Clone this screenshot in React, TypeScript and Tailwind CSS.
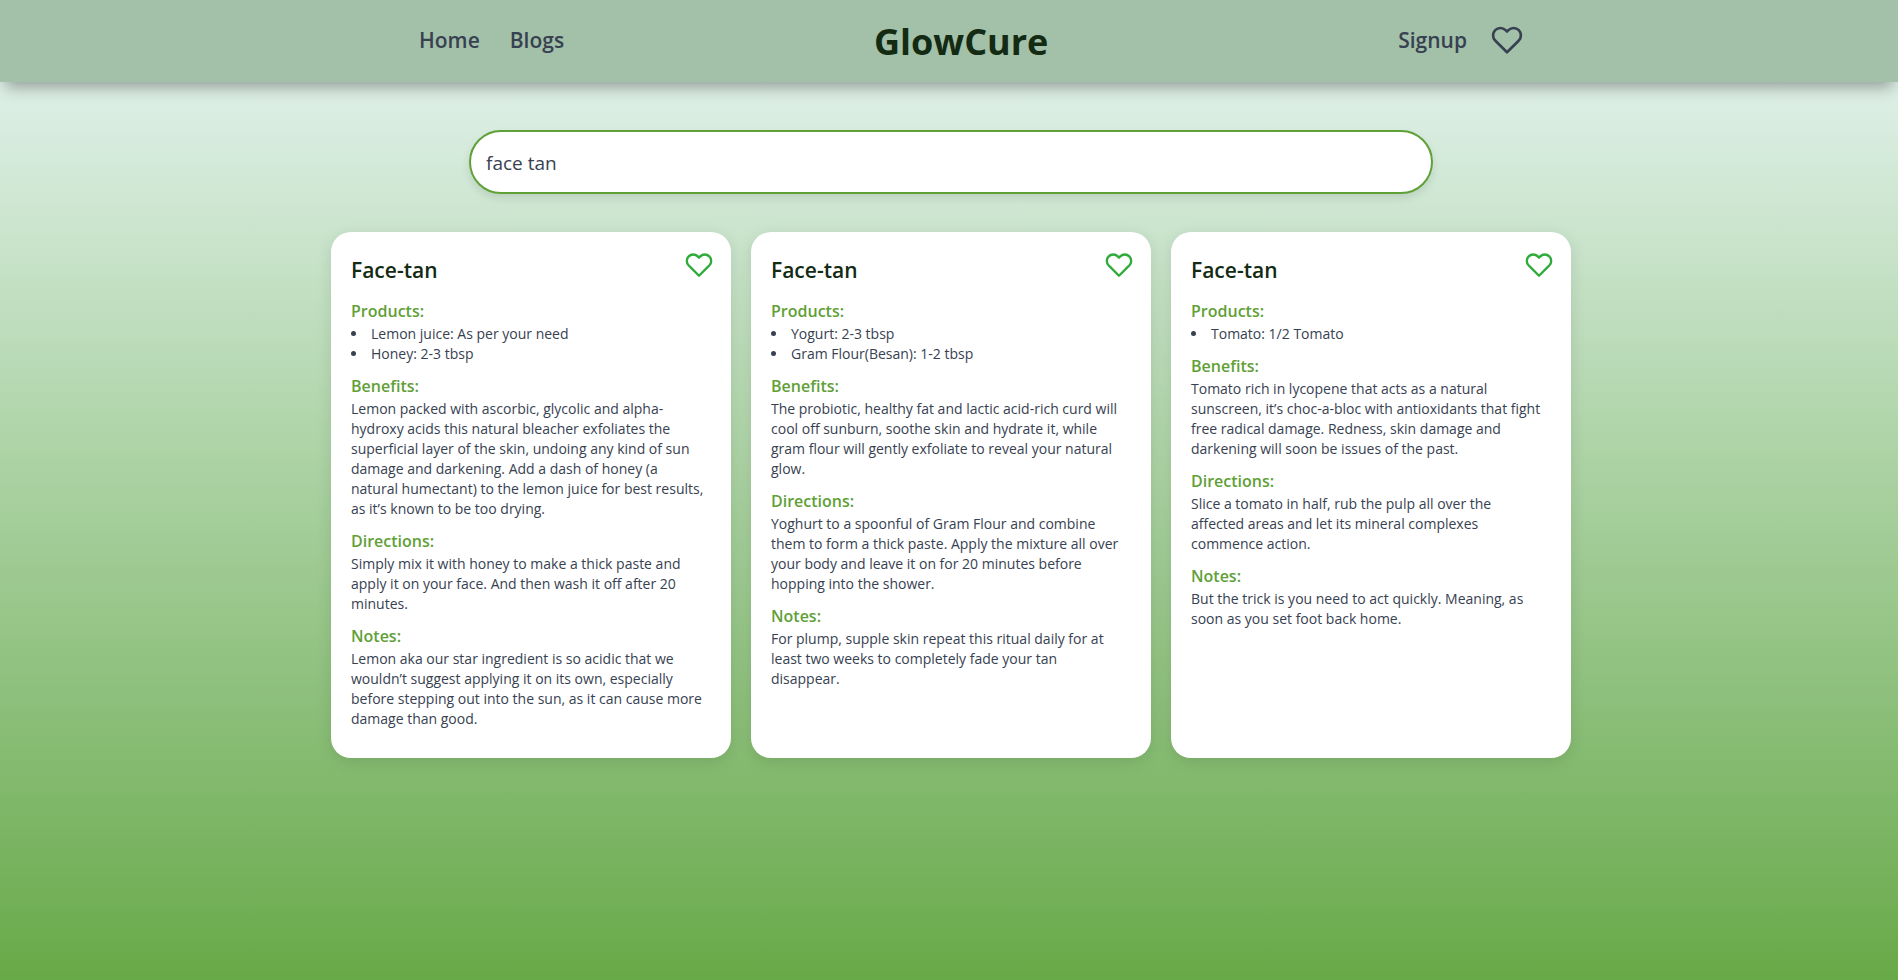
import { useState } from "react";
import { FiHeart } from "react-icons/fi";

type Remedy = {
  title: string;
  products: string[];
  benefits: string;
  directions: string;
  notes: string;
};

const remedies: Remedy[] = [
  {
    title: "Face-tan",
    products: ["Lemon juice: As per your need", "Honey: 2-3 tbsp"],
    benefits:
      "Lemon packed with ascorbic, glycolic and alpha-hydroxy acids this natural bleacher exfoliates the superficial layer of the skin, undoing any kind of sun damage and darkening. Add a dash of honey (a natural humectant) to the lemon juice for best results, as it’s known to be too drying.",
    directions:
      "Simply mix it with honey to make a thick paste and apply it on your face. And then wash it off after 20 minutes.",
    notes:
      "Lemon aka our star ingredient is so acidic that we wouldn’t suggest applying it on its own, especially before stepping out into the sun, as it can cause more damage than good.",
  },
  {
    title: "Face-tan",
    products: ["Yogurt: 2-3 tbsp", "Gram Flour(Besan): 1-2 tbsp"],
    benefits:
      "The probiotic, healthy fat and lactic acid-rich curd will cool off sunburn, soothe skin and hydrate it, while gram flour will gently exfoliate to reveal your natural glow.",
    directions:
      "Yoghurt to a spoonful of Gram Flour and combine them to form a thick paste. Apply the mixture all over your body and leave it on for 20 minutes before hopping into the shower.",
    notes:
      "For plump, supple skin repeat this ritual daily for at least two weeks to completely fade your tan disappear.",
  },
  {
    title: "Face-tan",
    products: ["Tomato: 1/2 Tomato"],
    benefits:
      "Tomato rich in lycopene that acts as a natural sunscreen, it’s choc-a-bloc with antioxidants that fight free radical damage. Redness, skin damage and darkening will soon be issues of the past.",
    directions:
      "Slice a tomato in half, rub the pulp all over the affected areas and let its mineral complexes commence action.",
    notes:
      "But the trick is you need to act quickly. Meaning, as soon as you set foot back home.",
  },
];

function SectionHeading({ children }: { children: string }) {
  return (
    <h3 className="text-base leading-[25px] font-semibold text-[#5fa037]">
      {children}
    </h3>
  );
}

function RemedyCard({ remedy }: { remedy: Remedy }) {
  const sections = [
    { label: "Benefits:", text: remedy.benefits },
    { label: "Directions:", text: remedy.directions },
    { label: "Notes:", text: remedy.notes },
  ];
  return (
    <article className="rounded-[20px] bg-white pt-[19px] pr-[18px] pb-[19px] pl-5 text-sm leading-5 text-[#374151] shadow-[0_4px_15px_rgba(0,0,0,0.1)]">
      <div className="mb-[10px] flex items-start justify-between">
        <h2 className="text-[21px] leading-[38px] font-semibold text-[#132a13]">
          {remedy.title}
        </h2>
        <button
          type="button"
          aria-label="Add to favourites"
          className="text-[#2eab3a]"
        >
          <FiHeart className="size-7" />
        </button>
      </div>
      <section className="mb-[10px]">
        <SectionHeading>Products:</SectionHeading>
        <ul className="list-inside list-disc">
          {remedy.products.map((product) => (
            <li key={product}>{product}</li>
          ))}
        </ul>
      </section>
      {sections.map((section) => (
        <section key={section.label} className="mb-[10px]">
          <SectionHeading>{section.label}</SectionHeading>
          <p className="pr-2">{section.text}</p>
        </section>
      ))}
    </article>
  );
}

export default function App() {
  const [query, setQuery] = useState("face tan");
  return (
    <div className="min-h-screen bg-linear-to-b from-[#dff0e8] from-8% via-[#a8d09f] via-50% to-[#68a947] font-['Open_Sans','Noto_Sans',sans-serif]">
      <header className="flex h-[82px] justify-center bg-[#a3c0a9] pl-11 shadow-[0_10px_15px_-5px_rgba(0,0,0,0.35)]">
        <nav className="flex w-full max-w-[1104px] items-center justify-between text-[21px] leading-8 font-semibold text-[#374151]">
          <div className="flex gap-[30px] pb-[2px]">
            <a href="#home">Home</a>
            <a href="#blogs">Blogs</a>
          </div>
          <a
            href="#top"
            className="mr-10 pt-[2px] text-4xl font-bold text-[#132a13]"
          >
            GlowCure
          </a>
          <div className="flex items-center gap-6 pb-[2px]">
            <a href="#signup">Signup</a>
            <a href="#favourites" aria-label="Favourites">
              <FiHeart className="size-8" />
            </a>
          </div>
        </nav>
      </header>
      <main className="flex flex-col items-center pt-12 pr-4 pb-12 pl-5">
        <input
          type="search"
          aria-label="Search remedies"
          value={query}
          onChange={(event) => setQuery(event.target.value)}
          className="h-16 w-full max-w-[964px] rounded-full border-2 border-[#5fa037] bg-white px-[15px] pt-[2px] text-[19px] text-[#374151] shadow-[0_4px_8px_rgba(0,0,0,0.1)] outline-none"
        />
        <div className="mt-[38px] grid w-full max-w-[1240px] grid-cols-1 gap-5 md:grid-cols-2 lg:grid-cols-3">
          {remedies.map((remedy) => (
            <RemedyCard key={remedy.products[0]} remedy={remedy} />
          ))}
        </div>
      </main>
    </div>
  );
}
